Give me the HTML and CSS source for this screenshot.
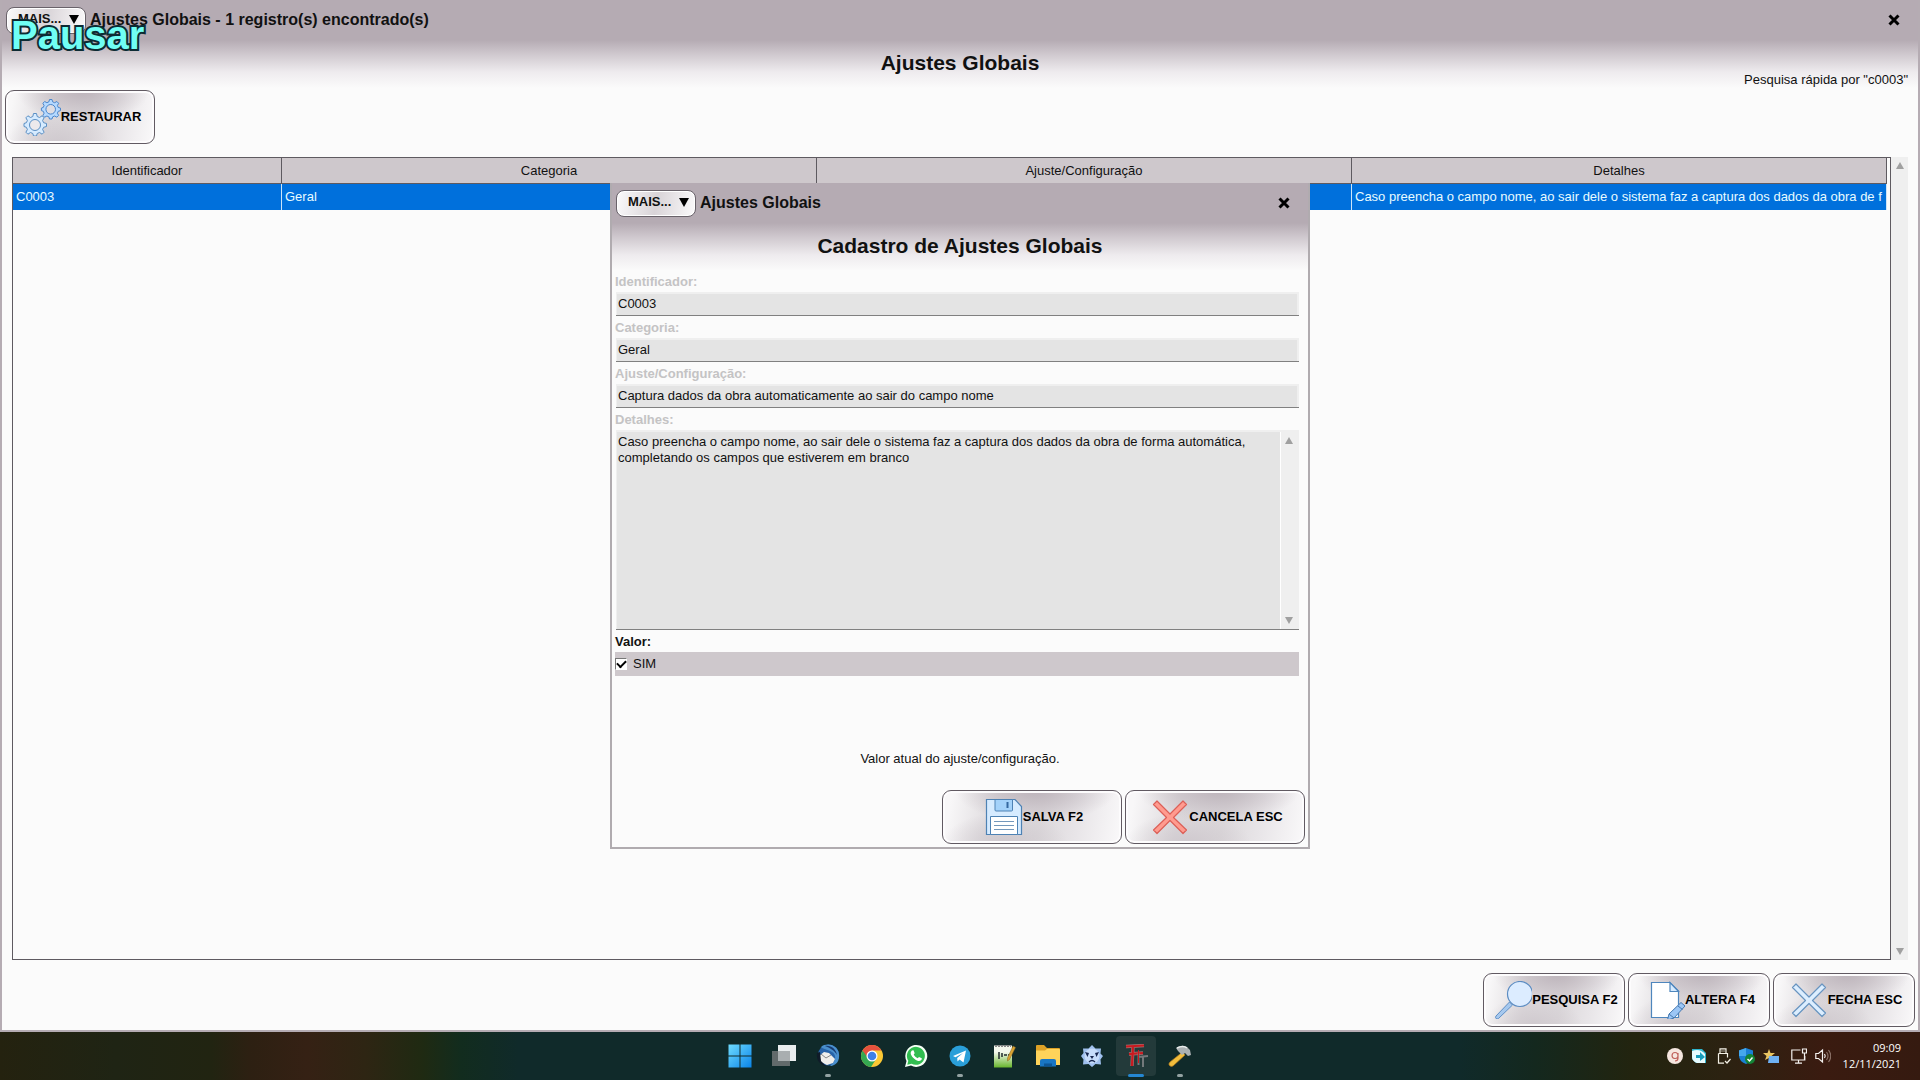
FILE: index.html
```html
<!DOCTYPE html>
<html lang="pt-BR">
<head>
<meta charset="utf-8">
<title>Ajustes Globais</title>
<link rel="stylesheet" href="styles.css">
</head>
<body>
<main class="window">
  <header class="banner">
    <div class="titlebar">
      <button class="more" type="button">MAIS... <span class="caret"></span></button>
      <span class="caption">Ajustes Globais - 1 registro(s) encontrado(s)</span>
      <button class="close" type="button" aria-label="Fechar"><svg viewBox="0 0 12 12"><path d="M1.5 1.5l9 9M10.5 1.5l-9 9"/></svg></button>
      <span class="pause">Pausar</span>
    </div>
    <div class="heading">
      <h1>Ajustes Globais</h1>
      <p class="quick">Pesquisa rápida por "c0003"</p>
    </div>
  </header>

  <div class="toolbar">
    <button class="action action-restore" type="button">
      <svg class="icon" viewBox="0 0 38 38">
        <g fill="#d6ebff" stroke="#5a8fc4" stroke-width="1">
          <path d="M10.500 15.500h3l.7 3 2.300 1 2.600-1.700 2 2-1.500 2.700 1 2.200 2.900.8v3l-2.900.8-1 2.200 1.500 2.700-2 2-2.600-1.700-2.300 1-.7 2.500h-3l-.7-2.500-2.300-1-2.600 1.700-2-2 1.500-2.700-1-2.200-2.400-.8v-3l2.400-.8 1-2.200-1.500-2.700 2-2 2.600 1.700 2.300-1z"/>
          <circle cx="12" cy="27" r="5.500" fill="#ece9ec"/>
          <g fill="#b5d9ff" stroke="#4a86cc"><path d="M26.500 1.500h2.500l.6 2.300 2 .9 2.300-1.200 1.700 1.800-1.200 2.200.8 1.900 2.300.7v2.500l-2.300.7-.8 1.900 1.200 2.200-1.700 1.800-2.300-1.200-2 .9-.6 2.100h-2.500l-.6-2.100-2-.9-2.300 1.200-1.700-1.800 1.200-2.200-.8-1.900-1.900-.7v-2.500l1.900-.7.8-1.900-1.200-2.200 1.700-1.800 2.300 1.200 2-.9z"/>
          <circle cx="27.700" cy="11.300" r="4.800" fill="#dfdde2"/></g>
        </g>
      </svg>
      RESTAURAR
    </button>
  </div>

  <section class="list">
    <div class="grid-box">
      <table>
        <colgroup><col class="col-id"><col><col><col></colgroup>
        <thead><tr><th>Identificador</th><th>Categoria</th><th>Ajuste/Configuração</th><th>Detalhes</th></tr></thead>
        <tbody><tr><td>C0003</td><td>Geral</td><td>Captura dados da obra automaticamente ao sair do campo nome</td><td>Caso preencha o campo nome, ao sair dele o sistema faz a captura dos dados da obra de f</td></tr></tbody>
      </table>
    </div>
    <div class="scroll"><i class="up"></i><i class="down"></i></div>
  </section>

  <footer class="actions">
    <button class="action" type="button">
      <svg class="icon" viewBox="0 0 38 38"><path d="M15.500 21l3 3L4.500 37.500q-1.500 1-2.500 0t0-2.500z" fill="#a6c8ee" stroke="#5f8fc6"/><circle cx="26" cy="13" r="12.500" fill="#dcecff" stroke="#5b8cc2" stroke-width="1.200"/></svg>
      PESQUISA F2
    </button>
    <button class="action" type="button">
      <svg class="icon" viewBox="0 0 38 38"><path d="M4.500 1.500H23l8.500 8.500v26.500h-27z" fill="#fff" stroke="#4e86bd" stroke-width="1.200"/><path d="M23 1.500v9h8.500z" fill="#d6ebff" stroke="#4e86bd" stroke-width="1.200"/><path d="M34 21.500l4 3.500-11 12-6.500 2 1.500-6z" fill="#9cc6f5" stroke="#4478b0"/><path d="M22 33l5 4M31 25l4.500 3.500" stroke="#4478b0"/></svg>
      ALTERA F4
    </button>
    <button class="action" type="button">
      <svg class="icon" viewBox="0 0 38 38"><path d="M6 3l13 13L32 3l3.500 3.500L22.500 19.500l13 12.500-3.500 3.500-13-13-13 13L2.500 32l13-12.500L2.500 6.500z" fill="#dceeff" stroke="#6794c0" stroke-width="1.200" stroke-linejoin="round"/></svg>
      FECHA ESC
    </button>
  </footer>

  <div class="overlay">
    <section class="dialog" role="dialog" aria-label="Ajustes Globais">
      <header class="banner">
        <div class="titlebar">
          <button class="more" type="button">MAIS... <span class="caret"></span></button>
          <span class="caption">Ajustes Globais</span>
          <button class="close" type="button" aria-label="Fechar"><svg viewBox="0 0 12 12"><path d="M1.500 1.500l9 9M10.500 1.500l-9 9"/></svg></button>
        </div>
        <div class="heading"><h2>Cadastro de Ajustes Globais</h2></div>
      </header>
      <form class="form">
        <label for="ident">Identificador:</label>
        <input class="field" id="ident" type="text" value="C0003" disabled>
        <label for="categ">Categoria:</label>
        <input class="field" id="categ" type="text" value="Geral" disabled>
        <label for="ajuste">Ajuste/Configuração:</label>
        <input class="field" id="ajuste" type="text" value="Captura dados da obra automaticamente ao sair do campo nome" disabled>
        <label for="detalhes">Detalhes:</label>
        <div class="memo">
          <textarea id="detalhes" disabled>Caso preencha o campo nome, ao sair dele o sistema faz a captura dos dados da obra de forma automática, completando os campos que estiverem em branco</textarea>
          <div class="scroll"><i class="up"></i><i class="down"></i></div>
        </div>
        <span class="label-on" id="valor">Valor:</span>
        <label class="check"><input type="checkbox" checked aria-describedby="valor"> SIM</label>
      </form>
      <p class="hint">Valor atual do ajuste/configuração.</p>
      <div class="actions">
        <button class="action action-wide" type="button">
          <svg class="icon" viewBox="0 0 38 38"><path d="M1.500 1.500H30l6.500 7v28h-35z" fill="#d6ebff" stroke="#4e82b4" stroke-width="1.200"/><path d="M10 1.500h17.500V12q0 1-1 1H11q-1 0-1-1z" fill="#a4d2fa" stroke="#4e82b4"/><path d="M22.500 4v6" stroke="#3568a0" stroke-width="2"/><path d="M5.500 36.500v-18h27v18z" fill="#fff" stroke="#4e82b4"/><path d="M9 23.500h20M9 27.500h20M9 31.500h20" stroke="#7397bb"/></svg>
          SALVA F2
        </button>
        <button class="action action-wide" type="button">
          <svg class="icon" viewBox="0 0 38 38"><path d="M6 3l13 13L32 3l3.500 3.500L22.500 19.500l13 12.500-3.500 3.500-13-13-13 13L2.500 32l13-12.500L2.500 6.500z" fill="#ff9b8f" stroke="#dc5f57" stroke-width="1.200" stroke-linejoin="round"/></svg>
          CANCELA ESC
        </button>
      </div>
    </section>
  </div>
</main>

<nav class="taskbar" aria-label="Barra de tarefas">
  <div class="apps">
    <button class="app" type="button" aria-label="Iniciar"><svg viewBox="0 0 24 24"><defs><linearGradient id="win" x1="0" y1="0" x2="1" y2="1"><stop offset="0" stop-color="#6fdcff"/><stop offset="1" stop-color="#0a84e8"/></linearGradient></defs><path d="M0.500 0.500h11v11h-11zM12.500 0.500h11v11h-11zM0.500 12.500h11v11h-11zM12.500 12.500h11v11h-11z" fill="url(#win)"/></svg></button>
    <button class="app" type="button" aria-label="Visão de tarefas"><svg viewBox="0 0 24 24"><path d="M6 1h18v16H6z" fill="#e9edee"/><path d="M0 7h18v15H0z" fill="#626a6b"/><path d="M6 7h12v10H6z" fill="#a9aeb0"/></svg></button>
    <button class="app running" type="button" aria-label="Thunderbird"><svg viewBox="0 0 24 24"><circle cx="12.500" cy="11" r="10.500" fill="#2763a8"/><path d="M5 3C11-2 22 1 23 10s-5 12-9 12c6-4 7-11 2-14S7 5 5 3z" fill="#4a8fcd"/><path d="M9 2c6-1 11 3 12 9-3-5-7-7-12-9z" fill="#173b71"/><path d="M3 12l5-4 5 1 6 6-2 4-6 2-6-3z" fill="#f0efec"/><path d="M5 10l5 4 5-3" fill="none" stroke="#888"/><path d="M1 9l3-1 1 9 5 5c-6-1-10-6-9-13z" fill="#101b29"/></svg></button>
    <button class="app" type="button" aria-label="Chrome"><svg viewBox="0 0 24 24"><circle cx="12" cy="12" r="11" fill="#fcc934"/><path d="M12 12L2.500 6.500A11 11 0 0 0 11 23l5.500-8.500z" fill="#35a852"/><path d="M2.500 6.500A11 11 0 0 1 21.500 6.500H12L8 14z" fill="#e5513e"/><circle cx="12" cy="12" r="5.500" fill="#fff"/><circle cx="12" cy="12" r="4.300" fill="#3f80e8"/></svg></button>
    <button class="app" type="button" aria-label="WhatsApp"><svg viewBox="0 0 24 24"><path d="M1 23l1.500-6A11 11 0 1 1 7 21.600z" fill="#f6fff6"/><path d="M3.300 20.700l1-4A9 9 0 1 1 7.500 19.700z" fill="#31bd50"/><path d="M8 6.500l1.500-.2 1.200 3-1 1.300c1 1.900 2.200 2.900 4 3.700l1.300-1.400 2.800 1.400c.3 2-2 3-3.500 2.600C10.500 16 7 12 6.700 9.500 6.600 8 7.300 7 8 6.500z" fill="#fff"/></svg></button>
    <button class="app running" type="button" aria-label="Telegram"><svg viewBox="0 0 24 24"><circle cx="12" cy="12" r="10.500" fill="#2a9fd9"/><path d="M5 12l13-5.500-2.500 12-4-3-2 2-.3-3.500L15 9l-7.500 4.200z" fill="#fff"/></svg></button>
    <button class="app" type="button" aria-label="Notepad++"><svg viewBox="0 0 24 24"><defs><linearGradient id="npp" x1="0" y1="0" x2="0" y2="1"><stop offset=".3" stop-color="#f3f7ec"/><stop offset="1" stop-color="#68b52d"/></linearGradient></defs><path d="M2 1.500h18v22H2z" fill="url(#npp)"/><path d="M3 2h16" stroke="#888" stroke-width="2" stroke-dasharray="2 1"/><path d="M7 8v7M10 9v4M12 11h3M16 11h3" stroke="#20282c" stroke-width="1.500"/><path d="M21 2l2.500 1.500-6 12-2 1.500v-3z" fill="#d9a333" stroke="#876321" stroke-width=".5"/></svg></button>
    <button class="app" type="button" aria-label="Explorador"><svg viewBox="0 0 24 24"><path d="M0 2q0-1 1-1h7l3 3h12q1 0 1 1v5H0z" fill="#dda126"/><path d="M0 6.500h9L11 5h12q1 0 1 1v15H0z" fill="#ffd35a"/><path d="M4 22.500V17q0-2 2-2h12q2 0 2 2v5.500z" fill="#1976c4"/><path d="M8 22.500v-3h8v3z" fill="#0d5595"/></svg></button>
    <button class="app" type="button" aria-label="Utilitário"><svg viewBox="0 0 24 24"><path d="M12 1l3.500 3.500h5.500l-.5 5L23 12l-2.500 3.500.5 5-5.500-.5L12 23l-3.500-3-5.500.5.500-5L1 12l2.500-3L3 4.500h5.500z" fill="#9fc0ee"/><circle cx="12" cy="12" r="7.500" fill="#c6dcfa"/><path d="M5 8l2.500 5L9 9zM15 9l1.500 4L19 8zM10 12h4l-2 3z" fill="#17264f"/><path d="M9 18q3-3 6 0" fill="none" stroke="#17264f" stroke-width="1.300"/></svg></button>
    <button class="app current" type="button" aria-label="Sistema"><svg viewBox="0 0 24 24" fill="none"><path d="M2 2.500l18-1M9 2L8 22M5 10l14-1" stroke="#a07474" stroke-width="3.400"/><path d="M2 2.500l18-1M9 2L8 22M5 10l14-1" stroke="#c8191f" stroke-width="2.200"/><path d="M14 13l10-1M19 12v11M14.500 9v12" stroke="#74797b" stroke-width="2"/><path d="M14.500 6v13" stroke="#c8191f"/></svg></button>
    <button class="app running" type="button" aria-label="Ferramenta"><svg viewBox="0 0 24 24"><path d="M14.500 8l2.500 3L5 22q-2 1-3.500-.5T2 18z" fill="#f1bd3c" stroke="#a9761c" stroke-width=".7"/><path d="M8 4q6-4 11-1l3 3 1 5-3 1-3-3-3 2-4-4z" fill="#aab0b2"/><path d="M9 4q6-3 10 0" stroke="#e8ecec" stroke-width="1.500" fill="none"/></svg></button>
  </div>
  <div class="tray">
    <svg viewBox="0 0 16 16"><circle cx="8" cy="8" r="8" fill="#f5e6df"/><path d="M11 5v5q0 3-3 3M11 8a3 3 0 1 1-3-3.500Q11 4.500 11 8z" fill="none" stroke="#c0625c" stroke-width="1.200"/></svg>
    <svg viewBox="0 0 16 16"><path d="M1 1h10l4 4v10H5l-4-4z" fill="#2eb5cd"/><path d="M1 3q8-3 13 3v9H6Q1 13 1 9z" fill="#e7fbff"/><path d="M5 7h4V4l5 5-5 4v-3H5z" fill="#189cbb"/></svg>
    <svg viewBox="0 0 16 16" fill="none" stroke="#f4f1e6" stroke-width="1.200"><path d="M5 5V.8h6V5M3.500 5.500h9v4M3.500 5.500v9.700H9M10 13l2 2 3.500-4M7 2.500v1M9 2.500v1"/></svg>
    <svg viewBox="0 0 16 16"><path d="M7 0l7 2.500V8q0 5-7 8-7-3-7-8V2.500z" fill="#1a80d4"/><path d="M7 0v8H0V2.500z" fill="#45a8ec"/><circle cx="11" cy="11" r="5" fill="#138436"/><path d="M8.500 11l2 2 3-3.500" fill="none" stroke="#fff" stroke-width="1.400"/></svg>
    <svg class="wide-gap" viewBox="0 0 16 16"><path d="M6 1l1.500 4H12L8.500 8l1 4L6 10l-4 2 1.500-4L0 5h4.500z" fill="#e9c562"/><path d="M6 8h10v7H5z" fill="#6eb1f4"/></svg>
    <svg viewBox="0 0 16 16" fill="none" stroke="#f4f1ee" stroke-width="1.200"><path d="M9.500 2H.8v10h13V8M7.500 12v3M4 15.200h7M11.500 1h4v4h-4zM13.500 5v7"/></svg>
    <svg viewBox="0 0 16 16" fill="none" stroke="#f4f1ee" stroke-width="1.200"><path d="M.8 5.500h2.700L7.500 2v12L3.500 10.500H.8zM9.500 6q1.500 2 0 4"/><path d="M11.500 4q3 4 0 8M13.500 2q4.500 6 0 12" stroke="#8a7066"/></svg>
    <time class="clock" datetime="2021-11-12T09:09">09:09<br>12/11/2021</time>
  </div>
</nav>
</body>
</html>
```
FILE: styles.css
```css
* { box-sizing: border-box; }

body {
  margin: 0;
  height: 100vh;
  display: flex;
  flex-direction: column;
  font: 13px/18px "Liberation Sans", Arial, sans-serif;
  color: #111;
  background: #102a2a;
}

button, input, textarea { font: inherit; color: inherit; }
button { padding: 0; border: 0; background: none; }
h1, h2, p { margin: 0; }

/* Main window */
.window {
  position: relative;
  flex: 1;
  min-height: 0;
  display: flex;
  flex-direction: column;
  border: solid #b5acb3;
  border-width: 0 2px 2px;
  background: #fbfbfb;
}

.banner {
  height: 88px;
  background: linear-gradient(#b5abb3 40px, #cfc8ce 54px, #eeebee 72px, #fbfbfb 88px);
}

.titlebar {
  position: relative;
  display: flex;
  align-items: center;
  gap: 4px;
  height: 40px;
  padding: 0 18px 0 4px;
}

.more {
  display: flex;
  align-items: center;
  justify-content: space-between;
  width: 80px;
  height: 27px;
  padding: 0 6px 2px 11px;
  border: 1px solid #69626a;
  border-radius: 8px;
  box-shadow: inset 0 0 0 1px #fff;
  background: linear-gradient(100deg, #fbfafb, #d9d4d8 50%, #fbfafb);
  font-weight: bold;
}

.caret {
  border: solid transparent;
  border-width: 9px 5px 0;
  border-top-color: #000;
}

.caption { flex: 1; font-size: 16px; font-weight: bold; }

.close { width: 12px; height: 12px; }
.close svg { display: block; fill: none; stroke: #000; stroke-width: 3; }

/* On-screen recorder label, floats over the title bar */
.pause {
  position: absolute;
  left: 9px;
  top: 13px;
  font-size: 40px;
  line-height: 44px;
  font-weight: bold;
  color: #70fff4;
  -webkit-text-stroke: 4px #0d2b33;
  paint-order: stroke fill;
}

.heading {
  display: grid;
  grid-template-columns: 1fr auto 1fr;
  height: 48px;
}
.heading h1, .heading h2 {
  grid-column: 2;
  font-size: 21px;
  line-height: 46px;
}
.quick { align-self: end; justify-self: end; padding-right: 10px; line-height: 16px; }

.toolbar { padding: 2px 3px 0; }

/* Glossy push buttons */
.action {
  display: flex;
  align-items: center;
  justify-content: center;
  width: 142px;
  height: 54px;
  padding-left: 4px;
  border: 1px solid #615a62;
  border-radius: 9px;
  box-shadow: inset 0 0 0 2px #fdfcfd;
  background:
    radial-gradient(ellipse 45% 60% at 52% 0, #bdb4bb, transparent),
    radial-gradient(ellipse 35% 60% at 35% 100%, #cfc9ce, transparent),
    linear-gradient(100deg, #f8f7f8 5%, #dedadd 30%, #dcd8db 55%, #e8e5e8 75%, #faf9fa);
  font-weight: bold;
  color: #000;
  white-space: nowrap;
}
.action-restore { width: 150px; }
.action-wide { width: 180px; }
.icon { width: 38px; height: 38px; flex: none; fill: none; }

.actions { display: flex; justify-content: flex-end; gap: 3px; padding: 0 3px; }
.window > .actions { padding: 13px 3px 3px; }

/* Record list */
.list {
  flex: 1;
  min-height: 0;
  display: flex;
  padding: 13px 10px 0 10px;
}
.grid-box { flex: 1; min-width: 0; border: 1px solid #5e5a60; }

table {
  table-layout: fixed;
  width: calc(100% - 3px);
  border-collapse: separate;
  border-spacing: 0;
}
.col-id { width: 269px; }
th, td {
  height: 26px;
  padding: 0 3px;
  border-right: 1px solid #5e5a60;
  white-space: nowrap;
}
th { border-bottom: 1px solid #5e5a60; background: #cec8cc; font-weight: normal; }
td { background: #0070dc; border-right-color: #cde4f8; color: #e8fbff; }
td:last-child { padding-right: 0; }

.scroll {
  display: flex;
  flex-direction: column;
  justify-content: space-between;
  align-items: center;
  width: 17px;
  padding: 5px 0;
  background: #efefef;
}
.scroll i { border: solid transparent; }
.scroll .up { border-width: 0 4px 7px; border-bottom-color: #a0a0a0; }
.scroll .down { border-width: 7px 4px 0; border-top-color: #a0a0a0; }

/* Edit dialog, floats over the list */
.overlay {
  position: absolute;
  inset: 0;
  display: grid;
  place-items: center;
  padding-top: 2px;
}
.dialog {
  width: 700px;
  border: solid #b0abaf;
  border-width: 0 2px 2px;
  background: #fbfbfb;
}
.dialog .banner { height: 87px; }

.form { display: flex; flex-direction: column; padding: 0 9px 0 3px; }
.form > label, .label-on {
  padding-top: 2px;
  line-height: 20px;
  font-weight: bold;
  color: #c4c3c4;
}
.form > .label-on { color: #111; }

.field, .memo {
  margin-left: 1px;
  border: solid #efefef;
  border-width: 2px 2px 0 1px;
  box-shadow: 0 1px #808080;
  margin-bottom: 1px;
  background: #e4e4e4;
}
.field {
  height: 23px;
  padding: 0 1px 2px;
  border-radius: 0;
  color: #111;
}
.memo { display: flex; height: 199px; }
.memo textarea {
  flex: 1;
  padding: 2px 1px;
  border: 0;
  border-right: 1px solid #fff;
  resize: none;
  overflow: hidden;
  line-height: 16px;
  color: #111;
  background: transparent;
}
.memo .scroll { width: 16px; }

.form > .check {
  display: flex;
  align-items: center;
  gap: 6px;
  height: 24px;
  padding: 0;
  background: #cec8cc;
  font-weight: normal;
  color: #111;
}
.check input {
  appearance: none;
  width: 12px;
  height: 12px;
  margin: 0;
  border: 1px solid #fff;
  border-top-color: #777;
  border-left-color: #777;
  background: #fff;
  display: grid;
  place-items: center;
}
.check input:checked::after {
  content: "";
  width: 7px;
  height: 4px;
  margin-bottom: 2px;
  border: solid #000;
  border-width: 0 0 2px 2px;
  transform: rotate(-45deg);
}

.hint { padding: 74px 0 22px; text-align: center; }
.dialog .actions { padding-bottom: 3px; }

/* Taskbar */
.taskbar {
  display: grid;
  grid-template-columns: 1fr auto 1fr;
  align-items: center;
  height: 48px;
  background: linear-gradient(90deg, #24220f, #1f2414 6%, #212411 11%, #2d2012 13%, #352114 16%, #2e2513 19%, #1f2a12 22%, #122c1e 24%, #102a2a 27%, #102a2a 76%, #14281e 80%, #22240f 85%, #2c2211 90%, #3a1b10 95%, #351a10);
}
.apps { grid-column: 2; display: flex; }
.app {
  position: relative;
  display: grid;
  place-items: center;
  width: 44px;
  height: 48px;
}
.app svg { width: 24px; height: 24px; }
.running::after, .current::after {
  content: "";
  position: absolute;
  bottom: 3px;
  width: 6px;
  height: 3px;
  border-radius: 2px;
  background: #93a2a2;
}
.current::after { width: 16px; background: #2587d2; }
.current::before {
  content: "";
  position: absolute;
  inset: 4px 2px;
  border-radius: 4px;
  background: #233a3a;
}
.current svg { position: relative; }

.tray {
  display: flex;
  justify-content: flex-end;
  align-items: center;
  gap: 8px;
  padding-right: 19px;
}
.tray svg { width: 16px; height: 16px; }
.tray .wide-gap { margin-right: 4px; }
.clock {
  width: 62px;
  font: 11px/16px "Open Sans", sans-serif;
  text-align: right;
  color: #fff;
}
```
